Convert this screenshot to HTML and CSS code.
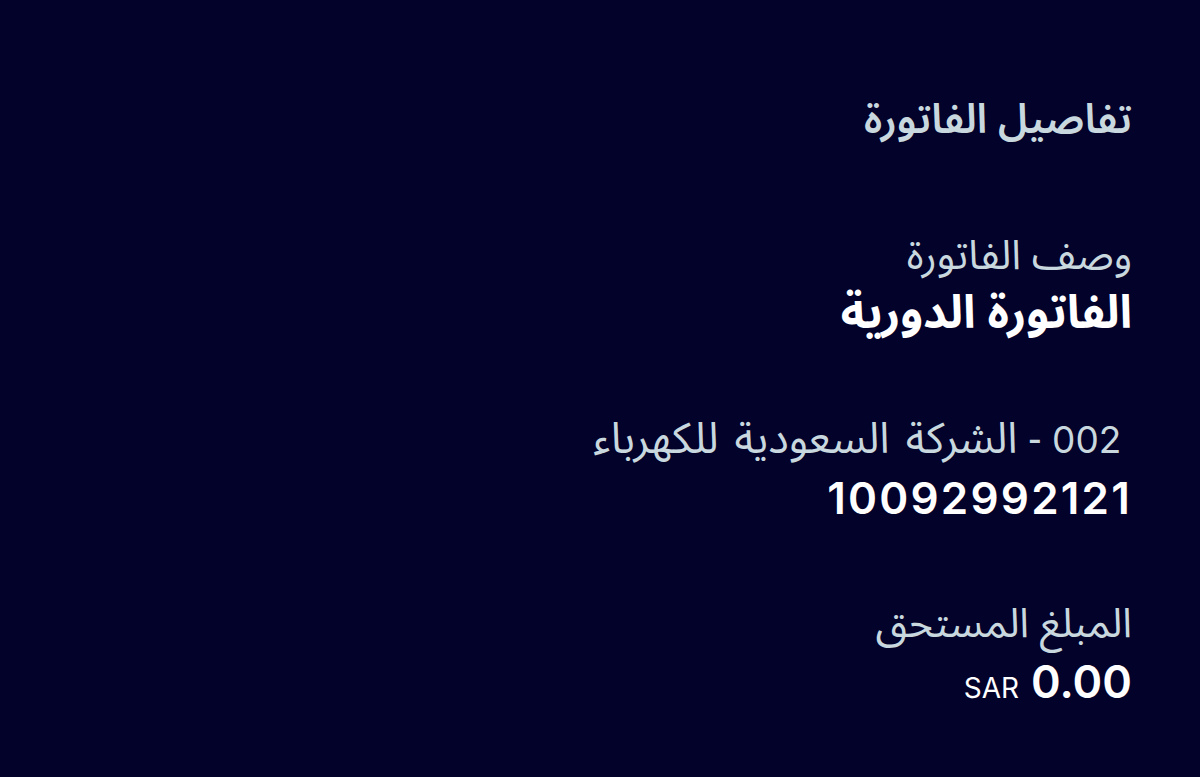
FILE: index.html
```html
<!DOCTYPE html>
<html lang="ar" dir="rtl">
<head>
<meta charset="utf-8">
<title>تفاصيل الفاتورة</title>
<link rel="stylesheet" href="styles.css">
</head>
<body>
<main class="invoice">
  <h1 class="invoice-title">تفاصيل الفاتورة</h1>
  <section class="field field-first">
    <div class="field-label">وصف الفاتورة</div>
    <div class="field-value">الفاتورة الدورية</div>
  </section>
  <section class="field">
    <div class="field-label">&nbsp;<span class="num">002</span> - <span class="company">الشركة السعودية للكهرباء</span></div>
    <div class="field-value num">10092992121</div>
  </section>
  <section class="field">
    <div class="field-label">المبلغ المستحق</div>
    <div class="field-value amount"><span class="num amount-value">0.00</span> <span class="currency">SAR</span></div>
  </section>
</main>
</body>
</html>
```
FILE: styles.css
```css
html, body {
  margin: 0;
  padding: 0;
  background: #03022a;
  height: 100%;
}
body {
  font-family: "Noto Sans Arabic", "DejaVu Sans", sans-serif;
  color: #ffffff;
}
.invoice {
  display: flex;
  flex-direction: column;
  align-items: flex-start;
  padding: 92px 68px 0 0;
}
.invoice-title {
  margin: 0;
  font-size: 41px;
  font-weight: 600;
  color: #c8d8de;
  line-height: 56px;
}
.field {
  display: flex;
  flex-direction: column;
  align-items: flex-start;
  margin-top: 68px;
}
.field-first {
  margin-top: 80px;
}
.field-label {
  font-size: 41px;
  font-weight: 400;
  color: #c8d8de;
  line-height: 56px;
}
.field-label .company {
  font-size: 43px;
  word-spacing: 5px;
}
.field-value {
  font-size: 46px;
  font-weight: 700;
  color: #ffffff;
  line-height: 60px;
}
.num {
  font-family: "Inter", "Roboto", sans-serif;
}
.field-label .num {
  font-size: 37px;
  font-weight: 400;
  letter-spacing: 1px;
}
.field-value.num {
  font-size: 44px;
  font-weight: 600;
  letter-spacing: 2.2px;
}
.amount {
  display: flex;
  align-items: baseline;
  gap: 12px;
}
.amount-value {
  font-size: 45px;
  font-weight: 600;
}
.currency {
  font-family: "Inter", "Roboto", sans-serif;
  font-size: 28px;
  font-weight: 400;
  color: #ffffff;
}
```
